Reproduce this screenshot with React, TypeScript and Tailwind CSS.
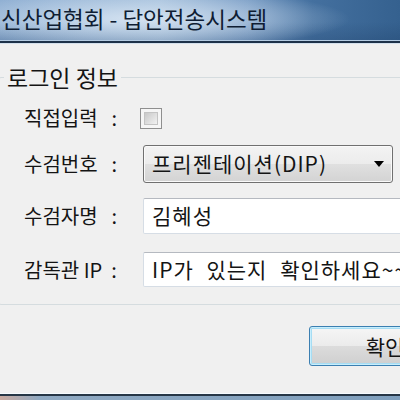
export default function App() {
  const label = "w-[144px] shrink-0 pl-[25px] text-[20px] leading-[28px] whitespace-nowrap";
  return (
    <div className="w-[400px] h-[400px] overflow-hidden bg-[#f0f0f0] font-['Noto_Sans_CJK_KR','Liberation_Sans',sans-serif] text-[#141414]">
      {/* title bar */}
      <div className="h-[40px] pl-[1px] pt-[3px] text-[22.5px] leading-[30px] text-[#0f1d33] whitespace-nowrap bg-[radial-gradient(ellipse_210px_30px_at_140px_19px,rgba(214,228,242,0.95),rgba(214,228,242,0)),linear-gradient(180deg,rgba(0,0,0,0)_55%,rgba(20,50,90,0.22)_100%),linear-gradient(90deg,#8aabd0_0%,#9ebbd9_40%,#7398c2_62%,#44709f_78%,#35618f_100%)]">
        신산업협회 - 답안전송시스템
      </div>
      <div className="h-[1px] bg-[#b4cbe2]" />
      <div className="h-[2px] bg-[#1d3149]" />
      <div className="h-[1px] bg-[#d4e0ec]" />

      {/* content */}
      <div className="h-[349px] flex flex-col">
        <fieldset className="mt-[18px] ml-[-2px] w-[440px] border border-[#d5dcdf] rounded-[3px] pb-[17px]">
          <legend className="ml-[5px] px-[3px] text-[23px] leading-[30px]">로그인 정보</legend>

          <div className="mt-[7px] h-[38px] flex items-center">
            <div className={label}>
              직접입력<span className="ml-[14px]">:</span>
            </div>
            <div className="ml-[-3px] w-[22px] h-[21px] border border-[#8f8f8f] bg-[#f6f6f6] p-[3px]">
              <div className="w-full h-full border border-[#c4c4c4] bg-[linear-gradient(135deg,#c9c9c9,#f2f2f2)]" />
            </div>
          </div>

          <div className="mt-[8px] h-[38px] flex items-center">
            <div className={label}>
              수검번호<span className="ml-[14px]">:</span>
            </div>
            <div className="w-[250px] h-[38px] rounded-[3px] border border-[#707070] bg-[linear-gradient(180deg,#f3f3f3_0%,#ececec_50%,#e0e0e0_50%,#d3d3d3_100%)] shadow-[inset_0_0_0_1px_#fafafa] flex items-center justify-between pl-[8px] pr-[8px] text-[21px] tracking-[1px] whitespace-nowrap">
              <span>프리젠테이션(DIP)</span>
              <svg width="10" height="6" viewBox="0 0 10 6">
                <path d="M0 0H10L5 6Z" fill="#000" />
              </svg>
            </div>
          </div>

          <div className="mt-[15px] h-[36px] flex items-center">
            <div className={label}>
              수검자명<span className="ml-[14px]">:</span>
            </div>
            <div className="w-[300px] h-[36px] rounded-[2px] border border-[#d6dde5] border-t-[#b5b9c0] bg-white flex items-center pl-[8px] text-[21px] tracking-[1px] whitespace-nowrap">
              김혜성
            </div>
          </div>

          <div className="mt-[18px] h-[35px] flex items-center">
            <div className={label}>
              감독관 IP<span className="ml-[9px]">:</span>
            </div>
            <div className="w-[300px] h-[35px] rounded-[2px] border border-[#d6dde5] border-t-[#b5b9c0] bg-white flex items-center pl-[8px] text-[21px] tracking-[1px] [word-spacing:7px] whitespace-nowrap overflow-hidden">
              IP가 있는지 확인하세요~~
            </div>
          </div>
        </fieldset>

        <button className="mt-[21px] ml-[309px] w-[152px] h-[40px] shrink-0 rounded-[3px] border border-[#3c7fb1] shadow-[inset_0_0_0_1px_#c8eefc,inset_0_0_0_2px_#a6ddf4] bg-[linear-gradient(180deg,#f6f6f6_0%,#ebebeb_50%,#dcdcdc_50%,#cfcfcf_100%)] flex items-center justify-center text-[21px] leading-[28px] text-[#141414]">
          확인
        </button>
      </div>

      {/* bottom edge */}
      <div className="h-[1px] bg-[#f6fbff]" />
      <div className="h-[2px] bg-[#263646]" />
      <div className="h-[4px] bg-[linear-gradient(90deg,#c9a99f_0%,#8fa9c2_10%,#7f9fbd_100%)]" />
    </div>
  );
}
